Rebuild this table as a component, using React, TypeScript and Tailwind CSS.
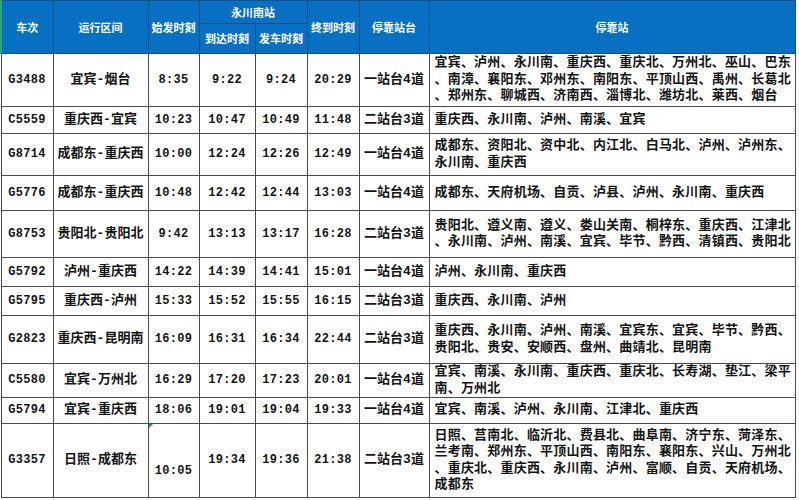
const ROWS = [
  { no: 'G3488', route: '宜宾-烟台', dep: '8:35', arr: '9:22', out: '9:24', end: '20:29', plat: '一站台4道', h: 'h-[53px]',
    stops: ['宜宾、泸州、永川南、重庆西、重庆北、万州北、巫山、巴东', '、南漳、襄阳东、邓州东、南阳东、平顶山西、禹州、长葛北', '、郑州东、聊城西、济南西、淄博北、潍坊北、莱西、烟台'] },
  { no: 'C5559', route: '重庆西-宜宾', dep: '10:23', arr: '10:47', out: '10:49', end: '11:48', plat: '二站台3道', h: 'h-[27px]',
    stops: ['重庆西、永川南、泸州、南溪、宜宾'] },
  { no: 'G8714', route: '成都东-重庆西', dep: '10:00', arr: '12:24', out: '12:26', end: '12:49', plat: '一站台4道', h: 'h-[42px]',
    stops: ['成都东、资阳北、资中北、内江北、白马北、泸州、泸州东、', '永川南、重庆西'] },
  { no: 'G5776', route: '成都东-重庆西', dep: '10:48', arr: '12:42', out: '12:44', end: '13:03', plat: '一站台4道', h: 'h-[35px]',
    stops: ['成都东、天府机场、自贡、泸县、泸州、永川南、重庆西'] },
  { no: 'G8753', route: '贵阳北-贵阳北', dep: '9:42', arr: '13:13', out: '13:17', end: '16:28', plat: '二站台3道', h: 'h-[47px]',
    stops: ['贵阳北、遵义南、遵义、娄山关南、桐梓东、重庆西、江津北', '、永川南、泸州、南溪、宜宾、毕节、黔西、清镇西、贵阳北'] },
  { no: 'G5792', route: '泸州-重庆西', dep: '14:22', arr: '14:39', out: '14:41', end: '15:01', plat: '一站台4道', h: 'h-[29px]',
    stops: ['泸州、永川南、重庆西'] },
  { no: 'G5795', route: '重庆西-泸州', dep: '15:33', arr: '15:52', out: '15:55', end: '16:15', plat: '二站台3道', h: 'h-[29px]',
    stops: ['重庆西、永川南、泸州'] },
  { no: 'G2823', route: '重庆西-昆明南', dep: '16:09', arr: '16:31', out: '16:34', end: '22:44', plat: '二站台3道', h: 'h-[48px]',
    stops: ['重庆西、永川南、泸州、南溪、宜宾东、宜宾、毕节、黔西、', '贵阳北、贵安、安顺西、盘州、曲靖北、昆明南'] },
  { no: 'C5580', route: '宜宾-万州北', dep: '16:29', arr: '17:20', out: '17:23', end: '20:01', plat: '一站台4道', h: 'h-[34px]',
    stops: ['宜宾、南溪、永川南、重庆西、重庆北、长寿湖、垫江、梁平', '南、万州北'] },
  { no: 'G5794', route: '宜宾-重庆西', dep: '18:06', arr: '19:01', out: '19:04', end: '19:33', plat: '一站台4道', h: 'h-[26px]',
    stops: ['宜宾、南溪、泸州、永川南、江津北、重庆西'] },
  { no: 'G3357', route: '日照-成都东', dep: '10:05', arr: '19:34', out: '19:36', end: '21:38', plat: '二站台3道', h: 'h-[74px]',
    stops: ['日照、莒南北、临沂北、费县北、曲阜南、济宁东、菏泽东、', '兰考南、郑州东、平顶山西、南阳东、襄阳东、兴山、万州北', '、重庆北、重庆西、永川南、泸州、富顺、自贡、天府机场、', '成都东'] },
];

const TH = 'border border-[#1d4e86] text-white text-[11px] font-bold text-center align-middle p-0';
const TD = 'border border-[#4a4a4a] text-center align-middle p-0 whitespace-nowrap';
const NUM = 'text-[12px] tracking-[0.3px]';
const CJK = 'text-[13px]';

export default function App() {
  return (
    <div className="w-[799px] h-[500px] bg-white overflow-hidden">
      <table className="table-fixed border-collapse w-[794px] font-['Liberation_Mono','Noto_Sans_CJK_SC',monospace] font-bold text-[#141414] leading-[16.5px]">
        <colgroup>
          <col className="w-[52px]" />
          <col className="w-[95px]" />
          <col className="w-[51px]" />
          <col className="w-[56px]" />
          <col className="w-[52px]" />
          <col className="w-[52px]" />
          <col className="w-[70px]" />
          <col className="w-[366px]" />
        </colgroup>
        <thead className="bg-[#0870c2] font-['Noto_Sans_CJK_SC',sans-serif]">
          <tr className="h-[23px]">
            <th rowSpan={2} className={`${TH} border-l-2 border-l-[#2fa36b]`}>车次</th>
            <th rowSpan={2} className={TH}>运行区间</th>
            <th rowSpan={2} className={TH}>始发时刻</th>
            <th colSpan={2} className={TH}>永川南站</th>
            <th rowSpan={2} className={TH}>终到时刻</th>
            <th rowSpan={2} className={TH}>停靠站台</th>
            <th rowSpan={2} className={TH}>停靠站</th>
          </tr>
          <tr className="h-[30px]">
            <th className={TH}>到达时刻</th>
            <th className={TH}>发车时刻</th>
          </tr>
        </thead>
        <tbody>
          {ROWS.map((r, i) => {
            const last = i === ROWS.length - 1;
            return (
              <tr key={r.no} className={`${r.h} ${last ? 'border-b border-dashed border-b-[#9a9a9a]' : ''}`}>
                <td className={`${TD} ${NUM}`}>{r.no}</td>
                <td className={`${TD} ${CJK}`}>{r.route}</td>
                <td className={`${TD} ${NUM} relative ${last ? 'pt-[22px]' : ''}`}>
                  {last && <span className="absolute left-0 top-0 w-0 h-0 border-t-[4px] border-r-[4px] border-t-[#2e8b57] border-r-transparent" />}
                  {r.dep}
                </td>
                <td className={`${TD} ${NUM}`}>{r.arr}</td>
                <td className={`${TD} ${NUM}`}>{r.out}</td>
                <td className={`${TD} ${NUM}`}>{r.end}</td>
                <td className={`${TD} ${CJK} overflow-hidden`}>{r.plat}</td>
                <td className={`${TD} ${CJK} text-left pl-[5px] tracking-[0.2px]`}>
                  {r.stops.map((s) => (
                    <div key={s}>{s}</div>
                  ))}
                </td>
              </tr>
            );
          })}
        </tbody>
      </table>
    </div>
  );
}
